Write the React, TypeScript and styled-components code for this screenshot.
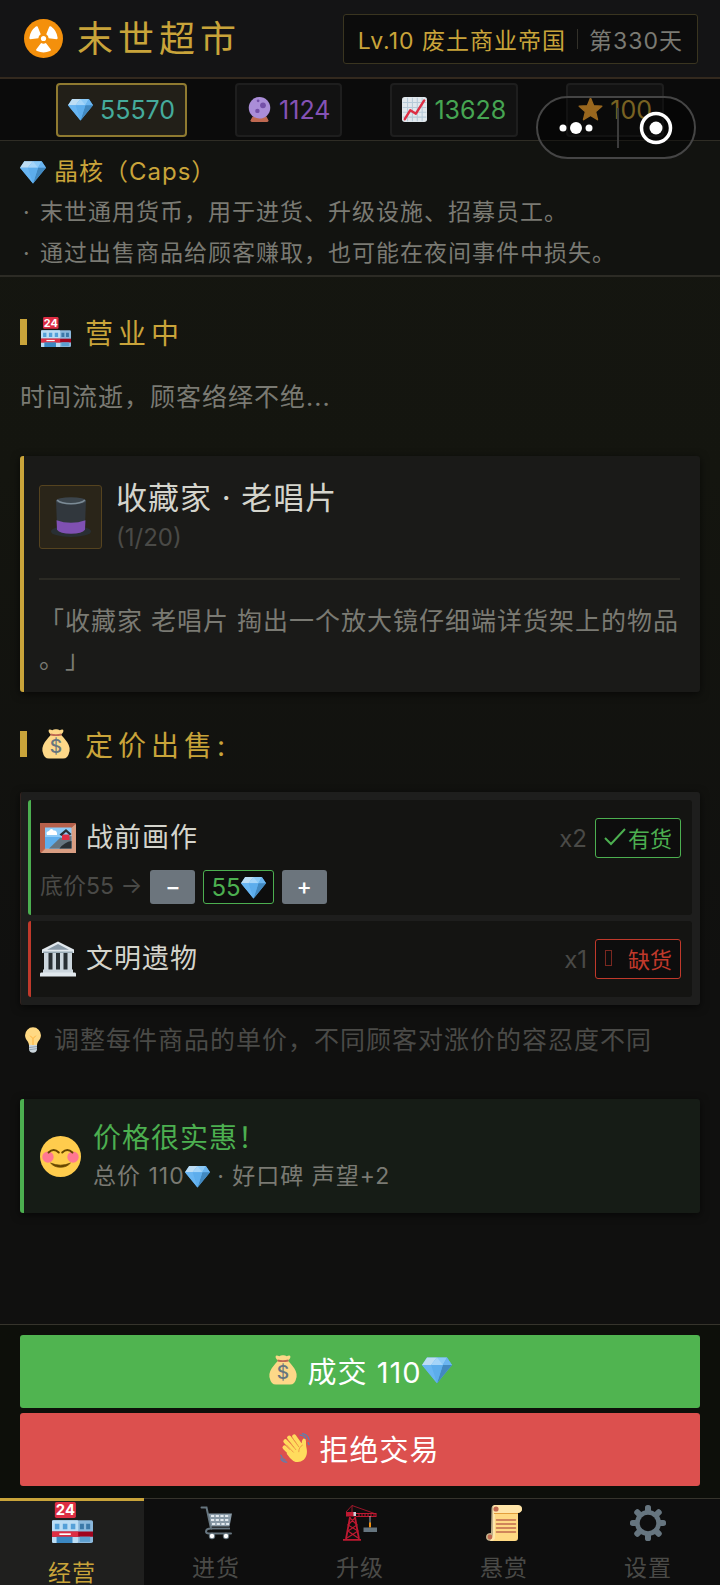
import React, { useState } from "react";
import styled, { createGlobalStyle, css } from "styled-components";

const color = {
  gold: "#c9a43a",
  green: "#4caf50",
  red: "#c0392b",
  text: "#d4d4cc",
  muted: "#7a7a73",
  dim: "#4a4a47",
  line: "#2f2d25",
};

const GlobalStyle = createGlobalStyle`
  *, *::before, *::after { box-sizing: border-box; }
  body {
    margin: 0;
    background: #111110;
    color: ${color.text};
    font-family: Inter, "Noto Sans CJK SC", sans-serif;
    font-size: 23px;
    font-weight: 400;
    letter-spacing: 1px;
  }
  button { font: inherit; letter-spacing: inherit; color: inherit; margin: 0; }
  h1, h2, h3, p, ul { margin: 0; padding: 0; font-weight: inherit; }
`;

/* ---------- icons ---------- */

const Svg = styled.svg<{ $size: number }>`
  display: block;
  flex: none;
  width: ${(p) => p.$size}px;
  height: ${(p) => p.$size}px;
`;

type IconProps = { size: number };

const Radioactive = ({ size }: IconProps) => (
  <Svg $size={size} viewBox="0 0 36 36" aria-hidden="true">
    <circle cx="18" cy="18" r="18" fill="#f4900c" />
    {[0, 120, 240].map((a) => (
      <path
        key={a}
        transform={`rotate(${a} 18 18)`}
        fill="#fff"
        d="M15.8 22.2 L11.2 28.2 Q11 29.2 12 29.6 Q18 32.2 24 29.6 Q25 29.2 24.8 28.2 L20.2 22.2 Q18 23.4 15.8 22.2Z"
      />
    ))}
    <circle cx="18" cy="18" r="2.4" fill="#fff" />
  </Svg>
);

const Gem = ({ size }: IconProps) => (
  <Svg $size={size} viewBox="0 0 36 36" aria-hidden="true">
    <path fill="#5dadec" d="M6 3h24l6 9-18 22L0 12z" />
    <path fill="#bdddf4" d="M6 3h12l-7 9H0z" />
    <path fill="#8ccaf7" d="M18 3h12l-5 9H11z" />
    <path fill="#6bb5f0" d="M30 3l6 9H25z" />
    <path fill="#a5d5f9" d="M18 3l7 9H11z" />
    <path fill="#4289c1" d="M36 12L18 34l7-22z" />
    <path fill="#5dadec" d="M11 12h14l-7 22z" />
    <path fill="#68b5f2" d="M0 12h11l7 22z" />
  </Svg>
);

const CrystalBall = ({ size }: IconProps) => (
  <Svg $size={size} viewBox="0 0 36 36" aria-hidden="true">
    <path fill="#bf6952" d="M8 28h20l3 6q0 2-2 2H7q-2 0-2-2z" />
    <circle cx="18" cy="15.5" r="15.5" fill="#aa8dd8" />
    <circle cx="23" cy="12" r="4.2" fill="#7450a8" />
    <circle cx="15" cy="20" r="3.2" fill="#7450a8" />
    <circle cx="16" cy="5.5" r="2" fill="#7450a8" />
    <path fill="#c1694f" d="M6 32h24v1.500H6z" />
  </Svg>
);

const Chart = ({ size }: IconProps) => (
  <Svg $size={size} viewBox="0 0 36 36" aria-hidden="true">
    <rect width="36" height="36" rx="4" fill="#e1e8ed" />
    <path d="M8 1v34M15 1v34M22 1v34M29 1v34M1 8h34M1 15h34M1 22h34M1 29h34" stroke="#b6cad8" strokeWidth="1.500" />
    <path d="M4 32l8-13 8 5L32 5" fill="none" stroke="#dd2e44" strokeWidth="3.500" strokeLinecap="round" strokeLinejoin="round" />
  </Svg>
);

const Star = ({ size }: IconProps) => (
  <Svg $size={size} viewBox="0 0 36 36" aria-hidden="true">
    <path
      d="M18 1.500l4.500 11 11.800.9-9 7.700 2.800 11.600L18 26.500 7.900 32.700l2.800-11.600-9-7.700 11.800-.9z"
      fill="#ffac33"
      stroke="#ffac33"
      strokeWidth="2"
      strokeLinejoin="round"
    />
  </Svg>
);

const Store = ({ size }: IconProps) => (
  <Svg $size={size} viewBox="0 0 36 36" aria-hidden="true">
    <rect x="0" y="16" width="36" height="20" rx="1.500" fill="#8bb8dc" />
    <rect x="0" y="16" width="23" height="20" rx="1" fill="#bbddf5" />
    <path d="M2.500 19h4v5h-4zM9.500 19h4v5h-4zM16.500 19h4v5h-4z" fill="#55a0d8" />
    <path d="M24.500 19h3.500v5h-3.500zM30 19h3.500v5H30z" fill="#3b78a8" />
    <path d="M0 26h36v4.500H0z" fill="#a0041e" />
    <path d="M0 26h23v4.500H0z" fill="#dd2e44" />
    <path d="M6.500 27.500h10v1.500h-10z" fill="#fff" />
    <path d="M4 30.500h14V36H4z" fill="#3b88c3" />
    <path d="M24.500 30.500h9V35h-9z" fill="#5c9fd0" />
    <rect x="2.500" width="18.500" height="14" rx="1.500" fill="#dd2e44" />
    <text x="11.750" y="11.600" textAnchor="middle" fontSize="13" fontWeight="700" letterSpacing="0" fill="#fff">
      24
    </text>
  </Svg>
);

const MoneyBag = ({ size }: IconProps) => (
  <Svg $size={size} viewBox="0 0 36 36" aria-hidden="true">
    <path fill="#fdd888" d="M12 7Q8 3 9.500.8q2-.5 4 .8 2-1.500 4.500-1.300 2.500-.2 4.500 1.300 2-1.300 4-.8Q28 3 24 7q4 4 7.500 9Q36 23 33.500 29q-1 6-7 6.500h-17q-6-.5-7-6.500Q0 23 4.500 16 8 11 12 7z" />
    <path fill="#bf6952" d="M11.500 5.500q6.500 1.800 13 0v2.300q-6.500 1.400-13 0z" />
    <text x="18" y="29" textAnchor="middle" fontSize="23" fontWeight="500" letterSpacing="0" fill="#67757f">
      $
    </text>
  </Svg>
);

const TopHat = ({ size }: IconProps) => (
  <Svg $size={size} viewBox="0 0 36 36" aria-hidden="true">
    <ellipse cx="18" cy="31" rx="18" ry="5" fill="#292f33" />
    <path fill="#31373d" d="M4.500 3h27l-1 25q-3 4-12.500 4T5.500 28z" />
    <path fill="#7f50b2" d="M5 21q13 4.500 26 0l-.4 8.500Q28 33 18 33T5.400 29.500z" />
    <ellipse cx="18" cy="3.500" rx="13.500" ry="3.300" fill="#3c454c" />
    <path d="M5.500 2.800Q9 6 18 6t12.500-3.200" fill="none" stroke="#7c8b96" strokeWidth="1.300" />
  </Svg>
);

const Picture = ({ size }: IconProps) => (
  <Svg $size={size} viewBox="0 0 36 36" aria-hidden="true">
    <rect y="3" width="36" height="30" rx="1.500" fill="#c1694f" />
    <path d="M36 4v29H1l5-5h25V8z" fill="#d99e82" />
    <path d="M0 3h36l-5 5H5v20l-5 4z" fill="#b5604b" />
    <rect x="5" y="7.500" width="26.500" height="21" fill="#8ccaf7" />
    <path d="M5 17h16v11.500H5z" fill="#5dadec" />
    <path d="M31.500 16L20 18 9 28.500h22.500z" fill="#66757f" />
    <path d="M31.500 21q-7 1-12 7.500h12z" fill="#292f33" />
    <path d="M22 14.500h7.500V20H22z" fill="#dd2e44" />
    <path d="M19.500 14.500L26 9l5.500 5-1.500 1.500-4-3.500-4.500 4z" fill="#292f33" />
    <path d="M7 15q-1.500-3.500 2-4 2-3.500 4.500-.5 4-.5 3.500 4.500z" fill="#fff" />
  </Svg>
);

const Museum = ({ size }: IconProps) => (
  <Svg $size={size} viewBox="0 0 36 36" aria-hidden="true">
    <path fill="#66757f" d="M4 10h28v20H4z" />
    <path fill="#292f33" d="M6 11h24v19H6z" />
    <path fill="#ccd6dd" d="M4 11h4.500v18H4zM12.500 11H16v18h-3.500zM20 11h3.500v18H20zM27.500 11H32v18h-4.500z" />
    <path fill="#e1e8ed" d="M18 .5L34 8.500V12H2V8.500z" />
    <path fill="#8899a6" d="M18 3l11 5.800H7z" />
    <path fill="#99aab5" d="M3 10.500h30V12H3z" />
    <path fill="#ccd6dd" d="M3 28.500h30V32H3z" />
    <path fill="#e1e8ed" d="M1 31.500h34q1 0 1 1.500v2.500H0V33q0-1.500 1-1.500z" />
  </Svg>
);

const Bulb = ({ size }: IconProps) => (
  <Svg $size={size} viewBox="0 0 36 36" aria-hidden="true">
    <path fill="#ffd983" d="M29 11.500C29 18 23.500 19.500 23.500 26h-11C12.500 19.500 7 18 7 11.500a11 11 0 0 1 22 0z" />
    <path d="M14 12l4 4 4-4M18 16v10" stroke="#ffac33" strokeWidth="1.200" fill="none" />
    <path fill="#ccd6dd" d="M12.500 25h11v6.500q-1 4-5.500 4t-5.500-4z" />
    <path d="M12.500 28.500l11-1.500M12.500 31.500l11-1.500" stroke="#8899a6" strokeWidth="1.200" />
  </Svg>
);

const Smile = ({ size }: IconProps) => (
  <Svg $size={size} viewBox="0 0 36 36" aria-hidden="true">
    <circle cx="18" cy="18" r="18" fill="#ffcc4d" />
    <circle cx="7" cy="18.500" r="5" fill="#ff7892" />
    <circle cx="29" cy="18.500" r="5" fill="#ff7892" />
    <path d="M7.500 14.500q4.500-4.500 9 0M19.500 14.500q4.500-4.500 9 0" fill="none" stroke="#664500" strokeWidth="1.700" strokeLinecap="round" />
    <path d="M9.300 23.800q8.700 3.600 17.400 0-3.200 3.700-8.700 3.700t-8.700-3.700z" fill="#664500" stroke="#664500" strokeWidth=".6" strokeLinejoin="round" />
  </Svg>
);

const Wave = ({ size }: IconProps) => (
  <Svg $size={size} viewBox="0 0 36 36" aria-hidden="true">
    <path d="M5.500 17.500l9 9M6.500 10l12 13M11 5.500l11 14M17 4l8.500 12" stroke="#ffdc5d" strokeWidth="5" strokeLinecap="round" />
    <path fill="#ffdc5d" d="M10 21L26 12q.5-5.500 3-5.500 2.500.2 2.200 4.500-.2 4 .8 8 1.500 8-3.500 13-6 5-12.500 1.500Q12 31 8 25z" />
    <path d="M8 14.500l8 8.500M9.500 8.500l9.500 11.500M14.500 5.500l8 11M27 14.500q-4.500 2.500-4.500 8" fill="none" stroke="#ef9645" strokeWidth="1.100" strokeLinecap="round" />
    <path d="M24 2.500q5 0 6.500 4M27 .8q6.500 1 8 7.500M33.800 11.500l1 2.500M1 26.500q1 4 5 6M1 31q2 3.500 7 4" fill="none" stroke="#5d7fb0" strokeWidth="1.600" strokeLinecap="round" />
  </Svg>
);

const Cart = ({ size }: IconProps) => (
  <Svg $size={size} viewBox="0 0 36 36" aria-hidden="true">
    <path d="M3.500 4.500h5l4.500 21q-5 0-5 3 0 2 3 2h22" transform="translate(0 -2)" fill="none" stroke="#66757f" strokeWidth="2" strokeLinecap="round" />
    <path d="M10.500 8.500h23.500l-2.500 13H13z" fill="#8899a6" />
    <path d="M13 11h19M13 15h18M14 19h17" stroke="#e1e8ed" strokeWidth="2" strokeDasharray="3.200 1.500" />
    <path d="M13 23.500h19" stroke="#66757f" strokeWidth="1.800" />
    <circle cx="14" cy="31" r="3.200" fill="#66757f" />
    <circle cx="28" cy="31" r="3.200" fill="#66757f" />
    <circle cx="14" cy="31" r="2.200" fill="#fff" />
    <circle cx="28" cy="31" r="2.200" fill="#fff" />
  </Svg>
);

const Crane = ({ size }: IconProps) => (
  <Svg $size={size} viewBox="0 0 36 36" aria-hidden="true">
    <g fill="none" stroke="#be1931">
      <path d="M8 12L4 34M13 12l4 22" strokeWidth="1.800" />
      <path d="M8 13l7 7-9 6 10 7M13 13l-7 7 10 6-11 7" strokeWidth="1.200" />
      <path d="M10 .5L4 7M10 .5L34 9M10 .5v8" strokeWidth=".8" />
      <path d="M14 11.500h20v-3H14" strokeWidth="1.100" />
      <path d="M17 8.500v3M20 8.500v3M23 8.500v3M26 8.500v3M29 8.500v3M32 8.500v3" strokeWidth="1" />
    </g>
    <path fill="#be1931" d="M4 7h10v4.500H4zM1 34h18v1.800H1z" />
    <path fill="#ccd6dd" d="M11.500 7h2.500v4h-2.500z" />
    <path d="M28 11v7" stroke="#ccd6dd" strokeWidth=".8" />
    <path d="M28 17.500v5" stroke="#f4900c" strokeWidth="2" />
    <path fill="#66757f" d="M21.500 22.500h13.500v4.500H21.500z" />
  </Svg>
);

const Scroll = ({ size }: IconProps) => (
  <Svg $size={size} viewBox="0 0 36 36" aria-hidden="true">
    <path fill="#ffd983" d="M9 0h23q4 1 4 4t-4 4v25q0 3-3 3H4l3-6V3q0-3 2-3z" />
    <path fill="#ffe8b6" d="M5 28q-5 0-5 4t5 4q4 0 4-4V8h22q5 0 5-4t-4-4H9Q5.500 0 5.500 4z" fillOpacity=".75" />
    <circle cx="10" cy="4" r="2.600" fill="#c1694f" />
    <circle cx="4" cy="32" r="2.400" fill="#c1694f" />
    <path d="M8 8.500h24" stroke="#e39f3d" strokeWidth="1" />
    <path d="M10.500 15h19M10.500 19h19M10.500 23h19M10.500 27h19" stroke="#c1694f" strokeWidth="1.500" strokeLinecap="round" />
  </Svg>
);

const Gear = ({ size }: IconProps) => (
  <Svg $size={size} viewBox="0 0 36 36" aria-hidden="true">
    {[0, 45, 90, 135].map((a) => (
      <rect key={a} x="15" y="0" width="6" height="36" rx="2.600" fill="#66757f" transform={`rotate(${a} 18 18)`} />
    ))}
    <circle cx="18" cy="18" r="13" fill="#66757f" />
    <circle cx="18" cy="18" r="8.300" fill="#0e0e0e" />
  </Svg>
);

const CheckMark = () => (
  <Svg $size={22} viewBox="0 0 22 22" aria-hidden="true">
    <path d="M1 12l6 6L21 3" fill="none" stroke="currentColor" strokeWidth="2" />
  </Svg>
);

/* ---------- page ---------- */

const Page = styled.div`
  position: relative;
  display: flex;
  flex-direction: column;
  min-height: 100vh;
  background: linear-gradient(#151611 0, #14150f 30%, #10100f 62%, #10100f 100%);
`;

const Header = styled.header`
  display: flex;
  align-items: center;
  justify-content: space-between;
  height: 79px;
  padding: 0 22px 0 24px;
  background: #141415;
  border-bottom: 2px solid #33291e;
`;

const Brand = styled.div`
  display: flex;
  align-items: center;
  gap: 14px;
`;

const Title = styled.h1`
  font-size: 36px;
  line-height: 48px;
  letter-spacing: 5px;
  color: ${color.gold};
`;

const Status = styled.div`
  display: flex;
  align-items: center;
  height: 50px;
  padding: 0 14px;
  border: 1px solid #3a3520;
  border-radius: 3px;
  background: #0c0c0c;
  color: ${color.gold};
  white-space: nowrap;
`;

const Day = styled.span`
  display: flex;
  align-items: center;
  color: ${color.muted};
  &::before {
    content: "";
    width: 1px;
    height: 20px;
    margin: 0 11px;
    background: #33312a;
  }
`;

const Resources = styled.div`
  display: flex;
  justify-content: space-around;
  align-items: center;
  height: 62px;
  padding: 0 32px;
  background: #0b0b0b;
  border-bottom: 1px solid ${color.line};
`;

const Chip = styled.button<{ $tint: string; $active: boolean }>`
  display: flex;
  align-items: center;
  gap: 7px;
  height: 54px;
  padding: 0 10px;
  border: 2px solid ${(p) => (p.$active ? "#8f7a30" : "#1e1e1e")};
  border-radius: 4px;
  background: ${(p) => (p.$active ? "#221f18" : "#121212")};
  color: ${(p) => p.$tint};
  font-size: 25px;
  letter-spacing: 0;
`;

const Info = styled.section`
  padding: 11px 20px 1px;
  background: #121310;
  border-bottom: 2px solid #2c2b25;
`;

const InfoTitle = styled.h2`
  display: flex;
  align-items: center;
  gap: 8px;
  font-size: 24px;
  line-height: 40px;
  color: ${color.gold};
`;

const InfoList = styled.ul`
  list-style: none;
  line-height: 41px;
  color: ${color.muted};
  li {
    display: flex;
  }
  li::before {
    content: "·";
    width: 20px;
    padding-left: 3px;
  }
`;

const Main = styled.main`
  flex: 1;
  padding: 35px 20px 0;
`;

const Heading = styled.h2`
  display: flex;
  align-items: center;
  height: 40px;
  color: ${color.gold};
  font-size: 28px;
  letter-spacing: 5px;
  &::before {
    content: "";
    width: 7px;
    height: 26px;
    margin-right: 14px;
    background: ${color.gold};
  }
  svg {
    margin-right: 14px;
  }
`;

const Lead = styled.p`
  margin-top: 25px;
  font-size: 25px;
  line-height: 40px;
  color: ${color.muted};
`;

const cardShadow = css`
  box-shadow: 0 2px 8px rgba(0, 0, 0, 0.6);
`;

const Customer = styled.section`
  margin: 39px 0 32px;
  padding: 19px 20px 14px 15px;
  border-left: 4px solid ${color.gold};
  border-radius: 3px;
  background: #1a1a18;
  ${cardShadow}
`;

const CustomerHead = styled.div`
  display: flex;
  align-items: center;
  gap: 14px;
  padding-bottom: 23px;
  border-bottom: 2px solid #2b2a24;
`;

const Avatar = styled.div`
  display: flex;
  align-items: center;
  justify-content: center;
  width: 63px;
  height: 64px;
  margin-top: 4px;
  border: 1px solid #55431f;
  border-radius: 3px;
  background: #2a2519;
`;

const Name = styled.h3`
  font-size: 31px;
  line-height: 46px;
  color: ${color.text};
`;

const Count = styled.p`
  font-size: 24px;
  line-height: 34px;
  letter-spacing: 0;
  color: ${color.dim};
`;

const Quote = styled.p`
  margin-top: 22px;
  font-size: 25px;
  line-height: 38px;
  line-break: anywhere;
  text-spacing-trim: space-all;
  color: ${color.muted};
`;

const Goods = styled.ul`
  display: flex;
  flex-direction: column;
  gap: 6px;
  margin-top: 28px;
  padding: 8px 8px 8px 7px;
  list-style: none;
  border-left: 1px solid #33231f;
  border-radius: 3px;
  background: #1e1e1d;
  ${cardShadow}
`;

const Item = styled.li<{ $tint: string }>`
  padding: 18px 11px 18px 9px;
  border-left: 3px solid ${(p) => p.$tint};
  border-radius: 3px;
  background: #141412;
`;

const ItemRow = styled.div`
  display: flex;
  align-items: center;
  gap: 10px;
  height: 40px;
`;

const ItemName = styled.h3`
  flex: 1;
  font-size: 27px;
  line-height: 40px;
  color: ${color.text};
`;

const Quantity = styled.span`
  margin-right: -2px;
  font-size: 24px;
  letter-spacing: 0;
  color: ${color.dim};
`;

const Badge = styled.span<{ $tint: string }>`
  display: flex;
  align-items: center;
  justify-content: space-between;
  width: 86px;
  height: 40px;
  padding: 0 8px 2px;
  border: 1px solid ${(p) => p.$tint};
  border-radius: 3px;
  background: #0d0d0d;
  color: ${(p) => p.$tint};
  font-size: 22px;
  letter-spacing: 0;
`;

const EmptyMark = styled.span`
  width: 7px;
  height: 16px;
  margin-left: 1px;
  border: 1px solid #7a2820;
`;

const PriceRow = styled.div`
  display: flex;
  align-items: center;
  gap: 8px;
  margin: 12px 0 -7px;
  color: ${color.dim};
  letter-spacing: 0;
`;

const BasePrice = styled.span`
  height: 34px;
  line-height: 32px;
`;

const Step = styled.button`
  width: 45px;
  height: 34px;
  padding: 0;
  border: 0;
  border-radius: 3px;
  background: #6c757d;
  color: #fff;
  font-size: 23px;
  font-weight: 500;
  line-height: 32px;
`;

const Price = styled.output`
  display: flex;
  align-items: center;
  height: 34px;
  padding: 0 7px;
  border: 1px solid ${color.green};
  border-radius: 3px;
  background: #0d0d0d;
  color: ${color.green};
  font-size: 24px;
`;

const Hint = styled.p`
  display: flex;
  align-items: center;
  gap: 8px;
  margin-top: 15px;
  font-size: 25px;
  line-height: 40px;
  color: ${color.dim};
`;

const Result = styled.section`
  display: flex;
  align-items: center;
  gap: 12px;
  min-height: 114px;
  margin: 39px 0 32px;
  padding: 0 16px;
  border-left: 4px solid ${color.green};
  border-radius: 3px;
  background: #161c16;
  ${cardShadow}
`;

const ResultTitle = styled.h3`
  font-size: 28px;
  line-height: 40px;
  color: ${color.green};
`;

const ResultText = styled.p`
  display: flex;
  align-items: center;
  line-height: 37px;
  color: ${color.muted};
  white-space: pre;
`;

const Actions = styled.div`
  display: flex;
  flex-direction: column;
  gap: 5px;
  padding: 10px 20px 12px;
  border-top: 1px solid #36342c;
  background: #0d0f0a;
`;

const Action = styled.button<{ $fill: string }>`
  display: flex;
  align-items: center;
  justify-content: center;
  gap: 9px;
  height: 73px;
  padding: 0 0 3px;
  border: 0;
  border-radius: 3px;
  background: ${(p) => p.$fill};
  color: #fff;
  font-size: 29px;
`;

const ActionLabel = styled.span`
  display: flex;
  align-items: center;
`;

const Nav = styled.nav`
  display: flex;
  height: 87px;
  background: #0e0e0e;
`;

const Tab = styled.button<{ $active: boolean }>`
  display: flex;
  flex: 1;
  flex-direction: column;
  align-items: center;
  justify-content: flex-start;
  gap: ${(p) => (p.$active ? 18 : 15)}px;
  padding: ${(p) => (p.$active ? "1px" : "6px")} 0 0;
  border: 0;
  border-top: ${(p) => (p.$active ? `3px solid ${color.gold}` : "1px solid #36342c")};
  background: ${(p) => (p.$active ? "#1f1f1e" : "#0e0e0e")};
  color: ${(p) => (p.$active ? color.gold : color.dim)};
  line-height: 24px;
`;

const Capsule = styled.div`
  position: absolute;
  top: 96px;
  right: 24px;
  display: flex;
  align-items: center;
  width: 160px;
  height: 63px;
  border: 2px solid #454545;
  border-radius: 32px;
  background: rgba(0, 0, 0, 0.4);
`;

const CapsuleButton = styled.button`
  display: flex;
  flex: 1;
  align-items: center;
  justify-content: center;
  height: 40px;
  padding: 0 3px 0 0;
  border: 0;
  background: none;
  & + & {
    padding: 0;
    border-left: 2px solid #3c3c3c;
  }
`;

const resources = [
  { id: "caps", label: "晶核", value: 55570, tint: "#45ab9c", Icon: Gem },
  { id: "orb", label: "水晶球", value: 1124, tint: "#8552b5", Icon: CrystalBall },
  { id: "trend", label: "营业额", value: 13628, tint: "#46a552", Icon: Chart },
  { id: "fame", label: "声望", value: 100, tint: "#c9a43a", Icon: Star },
];

const tabs = [
  { name: "经营", Icon: Store },
  { name: "进货", Icon: Cart },
  { name: "升级", Icon: Crane },
  { name: "悬赏", Icon: Scroll },
  { name: "设置", Icon: Gear },
];

export default function App() {
  const [tab, setTab] = useState("经营");
  const [resource, setResource] = useState("caps");
  const [price, setPrice] = useState(55);

  return (
    <>
      <GlobalStyle />
      <Page>
        <Header>
          <Brand>
            <Radioactive size={39} />
            <Title>末世超市</Title>
          </Brand>
          <Status>
            Lv.10 废土商业帝国
            <Day>第330天</Day>
          </Status>
        </Header>

        <Resources>
          {resources.map(({ id, label, value, tint, Icon }) => (
            <Chip key={id} aria-label={`${label} ${value}`} $tint={tint} $active={id === resource} onClick={() => setResource(id)}>
              <Icon size={25} />
              {value}
            </Chip>
          ))}
        </Resources>

        <Info>
          <InfoTitle>
            <Gem size={26} />
            晶核（Caps）
          </InfoTitle>
          <InfoList>
            <li>末世通用货币，用于进货、升级设施、招募员工。</li>
            <li>通过出售商品给顾客赚取，也可能在夜间事件中损失。</li>
          </InfoList>
        </Info>

        <Main>
          <Heading>
            <Store size={30} />
            营业中
          </Heading>
          <Lead>时间流逝，顾客络绎不绝...</Lead>

          <Customer>
            <CustomerHead>
              <Avatar>
                <TopHat size={40} />
              </Avatar>
              <div>
                <Name>收藏家 · 老唱片</Name>
                <Count>(1/20)</Count>
              </div>
            </CustomerHead>
            <Quote>「收藏家 老唱片 掏出一个放大镜仔细端详货架上的物品。」</Quote>
          </Customer>

          <Heading>
            <MoneyBag size={30} />
            定价出售:
          </Heading>
          <Goods>
            <Item $tint={color.green}>
              <ItemRow>
                <Picture size={36} />
                <ItemName>战前画作</ItemName>
                <Quantity>x2</Quantity>
                <Badge $tint={color.green}>
                  <CheckMark />
                  有货
                </Badge>
              </ItemRow>
              <PriceRow>
                <BasePrice>底价55 →</BasePrice>
                <Step aria-label="降价" onClick={() => setPrice(price - 1)}>
                  −
                </Step>
                <Price>
                  {price}
                  <Gem size={25} />
                </Price>
                <Step aria-label="涨价" onClick={() => setPrice(price + 1)}>
                  +
                </Step>
              </PriceRow>
            </Item>
            <Item $tint={color.red}>
              <ItemRow>
                <Museum size={36} />
                <ItemName>文明遗物</ItemName>
                <Quantity>x1</Quantity>
                <Badge $tint={color.red}>
                  <EmptyMark />
                  缺货
                </Badge>
              </ItemRow>
            </Item>
          </Goods>
          <Hint>
            <Bulb size={26} />
            调整每件商品的单价，不同顾客对涨价的容忍度不同
          </Hint>

          <Result>
            <Smile size={41} />
            <div>
              <ResultTitle>价格很实惠！</ResultTitle>
              <ResultText>
                {`总价 ${price * 2}`}
                <Gem size={25} />
                {" · 好口碑 声望+2"}
              </ResultText>
            </div>
          </Result>
        </Main>

        <Actions>
          <Action $fill="#50b450">
            <MoneyBag size={30} />
            <ActionLabel>
              成交 {price * 2}
              <Gem size={30} />
            </ActionLabel>
          </Action>
          <Action $fill="#dc504e">
            <Wave size={30} />
            拒绝交易
          </Action>
        </Actions>

        <Nav>
          {tabs.map(({ name, Icon }) => (
            <Tab key={name} $active={name === tab} onClick={() => setTab(name)}>
              <Icon size={name === "经营" ? 41 : 36} />
              {name}
            </Tab>
          ))}
        </Nav>

        <Capsule>
          <CapsuleButton aria-label="更多">
            <Svg $size={36} viewBox="0 0 36 36" aria-hidden="true">
              <circle cx="5" cy="18" r="3.500" fill="#fff" />
              <circle cx="18" cy="18" r="6" fill="#fff" />
              <circle cx="31" cy="18" r="3.500" fill="#fff" />
            </Svg>
          </CapsuleButton>
          <CapsuleButton aria-label="关闭">
            <Svg $size={34} viewBox="0 0 34 34" aria-hidden="true">
              <circle cx="17" cy="17" r="14.500" fill="none" stroke="#fff" strokeWidth="3.500" />
              <circle cx="17" cy="17" r="6.500" fill="#fff" />
            </Svg>
          </CapsuleButton>
        </Capsule>
      </Page>
    </>
  );
}
